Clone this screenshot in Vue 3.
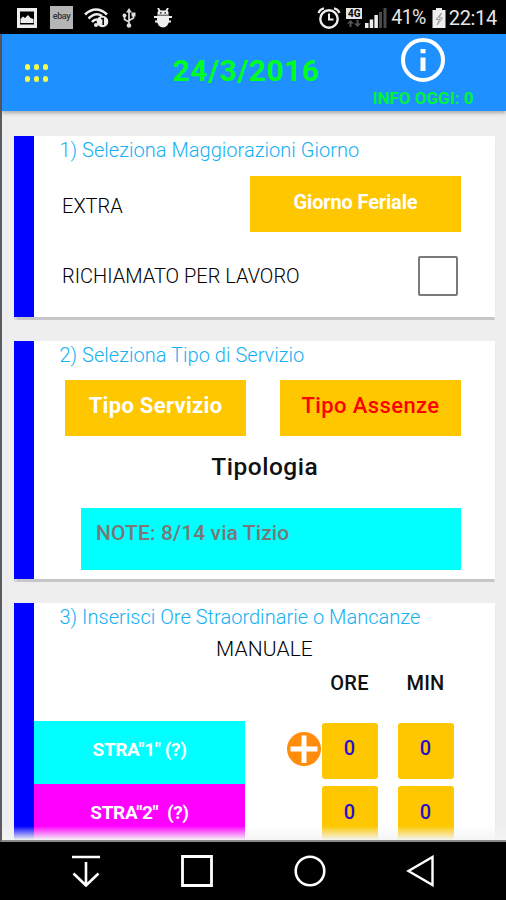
<template>
    <div class="phone">
        <div class="status-bar">
            <div class="status-left">
                <svg class="ic-picture" width="20" height="20" viewBox="0 0 20 20">
                    <path fill="#eee" fill-rule="evenodd" d="M0 0h20v20H0zM3 3.5v13h14v-13z" />
                    <path fill="#eee" d="M3.500 15v-4l2.500-2.500 2 1.500 3-3 2.500 3 3 1v4z" />
                </svg>
                <span class="ebay">ebay</span>
                <svg class="ic-wifi" width="25" height="20" viewBox="0 0 25 20">
                    <g fill="none" stroke="#eee" stroke-width="2.600">
                        <path d="M1 6.500Q12 -3.500 23 6.500" />
                        <path d="M4.500 10.500Q11.500 3.500 18 8" />
                        <path d="M8 14Q10.500 11 13.500 11.500" />
                    </g>
                    <circle cx="12" cy="17" r="2" fill="#eee" />
                    <circle cx="18.500" cy="13.500" r="5.800" fill="#eee" />
                    <path d="M17 10.500h2.200v6.500" fill="none" stroke="#000" stroke-width="1.500" />
                </svg>
                <svg class="ic-usb" width="14" height="20" viewBox="0 0 14 20">
                    <g fill="none" stroke="#ddd" stroke-width="1.700">
                        <path d="M7 3v14M2.500 8v3.500L7 14M11.500 6v4L7 12.500" />
                    </g>
                    <path d="M7 0l3 4.500H4z" fill="#ddd" />
                    <circle cx="2.500" cy="7.500" r="2" fill="#ddd" />
                    <path d="M9.500 4.500h4v4h-4z" fill="#ddd" />
                    <circle cx="7" cy="17.500" r="2.300" fill="#ddd" />
                </svg>
                <svg class="ic-droid" width="18" height="20" viewBox="0 0 18 20">
                    <path d="M3.500 6.800V4.500c0-1 1-2 2-2h7c1 0 2 1 2 2v2.300z" fill="#eee" />
                    <path d="M4 0l2 3.500M14 0l-2 3.500M0 9h18M1 13.500h16" stroke="#eee" stroke-width="1.900" />
                    <path d="M3 7.500h12v5.500a6 6.500 0 0 1-12 0z" fill="#eee" />
                    <path d="M6 4.800h1.500M10.500 4.800H12" stroke="#000" stroke-width="1.300" />
                </svg>
            </div>
            <div class="status-right">
                <svg class="ic-alarm" width="24" height="22" viewBox="0 0 24 22">
                    <circle cx="12" cy="12" r="8.700" fill="none" stroke="#eee" stroke-width="2.400" />
                    <path d="M1.500 6Q3 2 7 1.300M22.500 6Q21 2 17 1.300" fill="none" stroke="#eee" stroke-width="2.200" />
                    <path d="M12 6.500v6h4.500" fill="none" stroke="#eee" stroke-width="2" />
                </svg>
                <div class="net">
                    <span class="net-label">4G</span>
                    <svg width="14" height="8" viewBox="0 0 14 8">
                        <path d="M3.500 0L0 3.500h2.500V7h2V3.500H7zM10.500 7L7 3.500h2.500V0h2v3.500H14z" fill="#555" />
                    </svg>
                </div>
                <svg class="ic-signal" width="22" height="20" viewBox="0 0 22 20">
                    <path d="M0 15h3.500v5H0zM4.700 11.500h3.500V20H4.700zM9.400 7h3.500v13H9.400z" fill="#eee" />
                    <path d="M14 4h3v16h-3zM18.500 0h3v20h-3z" fill="#4a4a4a" />
                </svg>
                <span class="percent">41%</span>
                <svg class="ic-battery" width="14" height="20" viewBox="0 0 14 20">
                    <path d="M4 0h6v2h3.500v18H.5V2H4z" fill="#eee" />
                    <path d="M9.500 5L4 11.500h3.500L5 17l5.500-7H7z" fill="none" stroke="#999" stroke-width="1" />
                </svg>
                <span class="clock">22:14</span>
            </div>
        </div>

        <div class="app">
            <header class="toolbar">
                <div class="menu-dots">
                    <i v-for="n in 6" :key="n"></i>
                </div>
                <h1 class="date">24/3/2016</h1>
                <div class="info">
                    <svg width="44" height="44" viewBox="0 0 44 44">
                        <circle cx="22" cy="22" r="20" fill="none" stroke="#fff" stroke-width="4" />
                        <path d="M19.500 11h5v4.300h-5zM19.500 19.500h5v13.500h-5z" fill="#fff" />
                    </svg>
                    <span class="info-text">INFO OGGI: 0</span>
                </div>
            </header>

            <main class="content">
                <section class="card card-day">
                    <h2>1) Seleziona Maggiorazioni Giorno</h2>
                    <div class="row extra-row">
                        <span class="label">EXTRA</span>
                        <button class="btn btn-day">Giorno Feriale</button>
                    </div>
                    <div class="row recall-row">
                        <span class="label">RICHIAMATO PER LAVORO</span>
                        <span class="checkbox"></span>
                    </div>
                </section>

                <section class="card card-service">
                    <h2>2) Seleziona Tipo di Servizio</h2>
                    <div class="row type-row">
                        <button class="btn btn-type">Tipo Servizio</button>
                        <button class="btn btn-type absence">Tipo Assenze</button>
                    </div>
                    <h3 class="tipologia">Tipologia</h3>
                    <div class="note">NOTE: 8/14 via Tizio</div>
                </section>

                <section class="card card-hours">
                    <h2>3) Inserisci Ore Straordinarie o Mancanze</h2>
                    <p class="manual">MANUALE</p>
                    <div class="heads">
                        <span>ORE</span>
                        <span>MIN</span>
                    </div>
                    <div class="hour-row" v-for="row in rows" :key="row.name">
                        <div class="stra" :class="row.color">{{ row.label }}</div>
                        <div class="plus">
                            <svg v-if="row.plus" width="34" height="34" viewBox="0 0 34 34">
                                <circle cx="17" cy="17" r="17" fill="#ff8c0a" />
                                <path d="M17 3.500v27.500M3.500 17h27" stroke="#fff" stroke-width="5" />
                            </svg>
                        </div>
                        <button class="num">{{ row.ore }}</button>
                        <button class="num">{{ row.min }}</button>
                    </div>
                </section>
                <div class="fade"></div>
            </main>
        </div>

        <nav class="nav-bar">
            <svg width="28" height="32" viewBox="0 0 28 32">
                <path d="M0 2h28M14 7v22M1.500 18.500L14 30.500l12.500-12" fill="none" stroke="#fff" stroke-width="2.600" />
            </svg>
            <svg width="32" height="32" viewBox="0 0 32 32">
                <path d="M1.500 1.500h29v29h-29z" fill="none" stroke="#fff" stroke-width="2.800" />
            </svg>
            <svg width="32" height="32" viewBox="0 0 32 32">
                <circle cx="16" cy="16" r="14.300" fill="none" stroke="#fff" stroke-width="2.600" />
            </svg>
            <svg width="28" height="32" viewBox="0 0 28 32">
                <path d="M26.500 2v28L2.500 16z" fill="none" stroke="#fff" stroke-width="2.400" />
            </svg>
        </nav>
    </div>
</template>

<script setup>
import { ref } from 'vue'

const rows = ref([
    { name: 'stra1', label: 'STRA"1" (?)', color: 'cyan', plus: true, ore: 0, min: 0 },
    { name: 'stra2', label: 'STRA"2"\u00a0 (?)', color: 'magenta', plus: false, ore: 0, min: 0 }
])
</script>

<style>
body {
    margin: 0;
    background: #000;
}
</style>

<style scoped>
* {
    box-sizing: border-box;
}
.phone {
    width: 506px;
    height: 900px;
    display: flex;
    flex-direction: column;
    overflow: hidden;
    background: #000;
    font-family: Roboto, "Liberation Sans", sans-serif;
    white-space: nowrap;
}
h1, h2, h3, p {
    margin: 0;
}
svg {
    display: block;
    flex: none;
}
button {
    border: 0;
    padding: 0;
    font-family: inherit;
}

/* status bar */
.status-bar {
    height: 34px;
    flex: none;
    display: flex;
    justify-content: space-between;
    padding: 1px 9px 0 17px;
    color: #e6e6e6;
}
.status-left, .status-right {
    display: flex;
    align-items: center;
}
.ebay {
    width: 23px;
    height: 23px;
    margin: 0 11px 0 13px;
    background: #b5b5b5;
    color: #333;
    font-size: 9px;
    font-weight: 500;
    line-height: 21px;
    text-align: center;
    letter-spacing: -0.4px;
}
.ic-usb {
    margin-left: 13px;
}
.ic-droid {
    margin-left: 18px;
}
.net {
    width: 16px;
    margin-left: 5px;
    display: flex;
    flex-direction: column;
    align-items: center;
    gap: 1px;
}
.net-label {
    width: 16px;
    height: 11px;
    background: #e6e6e6;
    color: #000;
    font-size: 10px;
    font-weight: 700;
    line-height: 11px;
    text-align: center;
}
.ic-signal {
    margin-left: 3px;
}
.percent {
    margin-left: 4px;
    font-size: 19.500px;
    line-height: 34px;
    letter-spacing: -0.6px;
}
.ic-battery {
    margin-left: 6px;
}
.clock {
    margin-left: 3px;
    font-size: 20px;
    line-height: 34px;
    letter-spacing: -0.3px;
}

/* toolbar */
.app {
    height: 808px;
    flex: none;
    display: flex;
    flex-direction: column;
    border-left: 2px solid #5c5c60;
    border-bottom: 2px solid #8a8a8a;
    background: #eee;
}
.toolbar {
    height: 77px;
    flex: none;
    display: flex;
    background: #1e90ff;
    box-shadow: 0 2px 4px rgba(0, 0, 0, 0.3);
    z-index: 1;
}
.menu-dots {
    display: grid;
    grid-template-columns: repeat(3, 5.500px);
    gap: 6.500px 3.500px;
    align-content: start;
    width: 148px;
    padding: 30px 0 0 22.800px;
}
.menu-dots i {
    height: 5.500px;
    border-radius: 50%;
    background: #f4ff4a;
}
.date {
    width: 192px;
    text-align: center;
    color: #00ff21;
    font-size: 30px;
    font-weight: 700;
    line-height: 73px;
    letter-spacing: 0.45px;
}
.info {
    width: 162px;
    display: flex;
    flex-direction: column;
    align-items: center;
    padding-top: 4px;
}
.info-text {
    color: #00f43c;
    font-size: 17px;
    font-weight: 700;
    line-height: 32px;
}

/* cards */
.content {
    position: relative;
    flex: 1;
    min-height: 0;
    overflow: hidden;
    padding: 24.500px 11.500px 0 12px;
}
.card {
    border-left: 20.500px solid #0000ff;
    background: #fff;
    box-shadow: 0 2.500px 1px #c6c6c6;
}
.card h2 {
    padding-left: 25.500px;
    color: #14b0f4;
    font-size: 20px;
    font-weight: 350;
    line-height: 28px;
    letter-spacing: 0.03px;
}
.card-day {
    height: 181.500px;
}
.card-service {
    height: 237.500px;
    margin-top: 24px;
}
.card-hours {
    height: 300px;
    margin-top: 24px;
}
.row {
    display: flex;
    align-items: center;
    justify-content: space-between;
    padding-right: 33.500px;
}
.label {
    color: #000;
    font-size: 20px;
    font-weight: 300;
}
.extra-row {
    height: 56px;
    margin-top: 12.500px;
    padding-left: 28px;
}
.extra-row .label {
    padding-top: 3px;
}
.recall-row {
    height: 40px;
    margin-top: 23.500px;
    padding-left: 28px;
    padding-right: 37px;
}
.btn {
    display: flex;
    justify-content: center;
    height: 56px;
    background: #fec700;
    color: #fff;
    font-weight: 700;
}
.btn-day {
    width: 211px;
    font-size: 20px;
    line-height: 52px;
    letter-spacing: -0.15px;
}
.checkbox {
    width: 40px;
    height: 40px;
    border: 2px solid #7a7a7a;
    border-radius: 2px;
}
.type-row {
    margin-top: 10.500px;
    padding-left: 31px;
}
.btn-type {
    width: 181px;
    font-size: 22px;
    line-height: 51px;
    letter-spacing: 0.3px;
}
.absence {
    color: #f00;
    font-weight: 500;
    letter-spacing: 0.4px;
}
.tipologia {
    margin: 16.500px 0 0;
    padding-left: 1px;
    text-align: center;
    color: #111;
    font-size: 24.500px;
    font-weight: 500;
    line-height: 30px;
    letter-spacing: 0.5px;
}
.note {
    height: 62.500px;
    margin: 25.500px 33.500px 0 47px;
    padding-left: 15px;
    background: #00ffff;
    color: #7b7777;
    font-size: 21px;
    font-weight: 500;
    line-height: 50px;
    letter-spacing: 0.1px;
}
.manual {
    width: 461px;
    text-align: center;
    color: #000;
    font-size: 21px;
    font-weight: 300;
    line-height: 36px;
    letter-spacing: 0.1px;
}
.heads {
    display: flex;
    padding-left: 287.500px;
    gap: 20px;
    color: #111;
    font-size: 20px;
    font-weight: 500;
    line-height: 33px;
    height: 54px;
    letter-spacing: 0.2px;
}
.heads span {
    width: 56px;
    text-align: center;
}
.hour-row {
    display: flex;
    height: 63.500px;
}
.stra {
    width: 211px;
    text-align: center;
    color: #fff;
    font-size: 19px;
    font-weight: 700;
    line-height: 57px;
    letter-spacing: -0.35px;
}
.cyan {
    background: #00ffff;
}
.magenta {
    background: #ff00ff;
}
.plus {
    width: 76.500px;
    padding: 11px 0 0 41.500px;
}
.num {
    width: 56px;
    height: 56px;
    margin: 2px 20px 0 0;
    border-radius: 3px;
    background: #fec700;
    color: #2a10c8;
    font-size: 20px;
    font-weight: 500;
    padding-bottom: 5px;
}
.fade {
    position: absolute;
    left: 0;
    right: 0;
    bottom: 0;
    height: 14px;
    background: linear-gradient(rgba(240, 240, 240, 0), #f4f4f4);
}

/* navigation */
.nav-bar {
    flex: 1;
    display: flex;
    align-items: center;
    gap: 80.800px;
    padding-left: 72px;
}
</style>
